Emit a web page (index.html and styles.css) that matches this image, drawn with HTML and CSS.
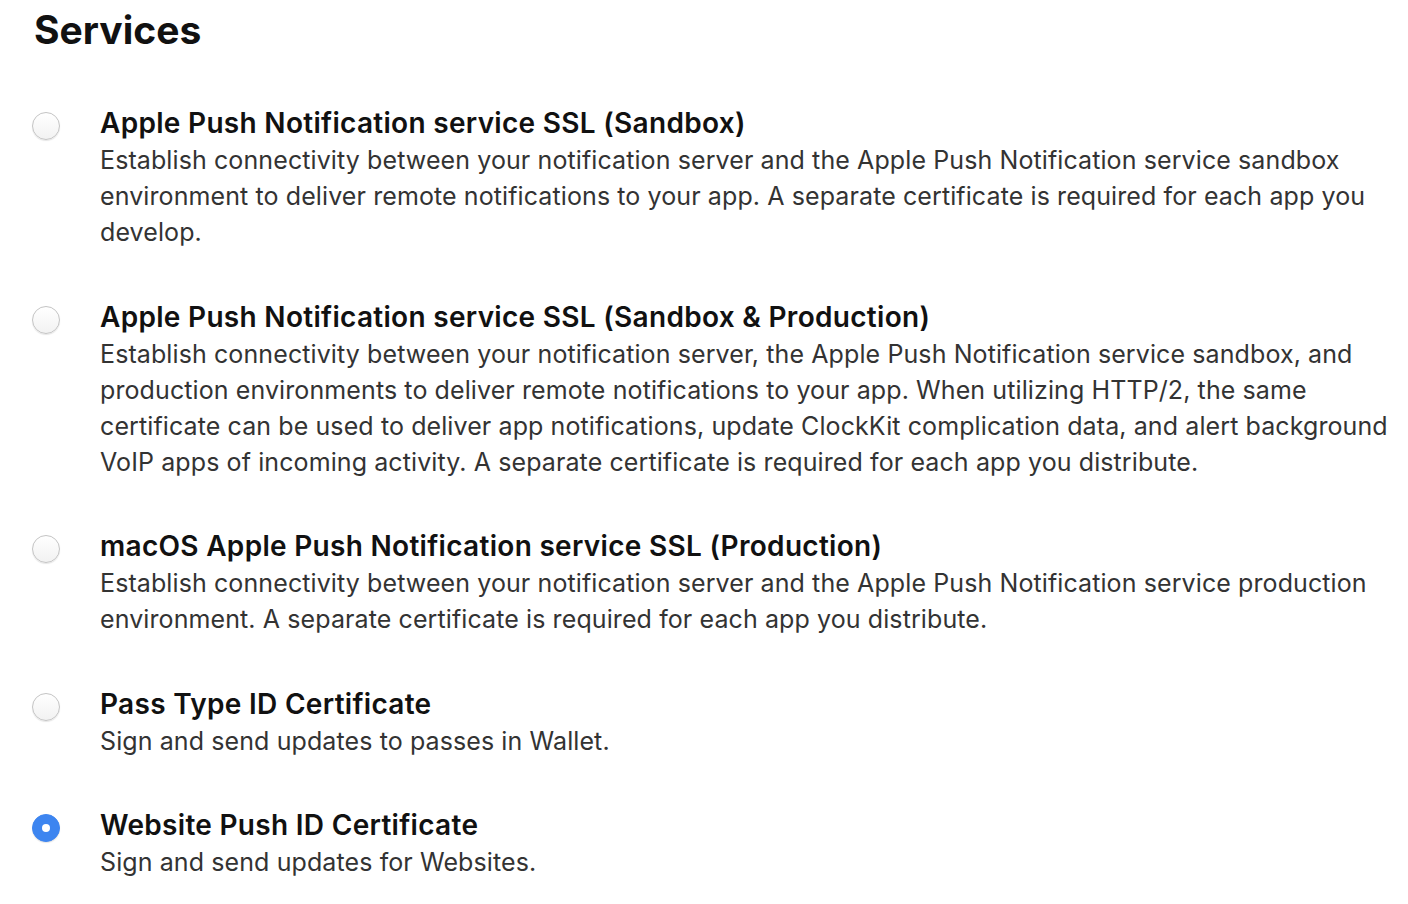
FILE: index.html
```html
<!DOCTYPE html>
<html lang="en">
<head>
    <meta charset="UTF-8">
    <title>Services</title>
    <link rel="stylesheet" href="styles.css">
</head>
<body>
    <div class="page">
        <h1>Services</h1>

        <ul class="services">
            <li class="service">
                <span class="radio"></span>
                <div class="service-text">
                    <h2>Apple Push Notification service SSL (Sandbox)</h2>
                    <p>Establish connectivity between your notification server and the Apple Push Notification service sandbox environment to deliver remote notifications to your app. A separate certificate is required for each app you develop.</p>
                </div>
            </li>
            <li class="service">
                <span class="radio"></span>
                <div class="service-text">
                    <h2>Apple Push Notification service SSL (Sandbox &amp; Production)</h2>
                    <p>Establish connectivity between your notification server, the Apple Push Notification service sandbox, and production environments to deliver remote notifications to your app. When utilizing HTTP/2, the same certificate can be used to deliver app notifications, update ClockKit complication data, and alert background VoIP apps of incoming activity. A separate certificate is required for each app you distribute.</p>
                </div>
            </li>
            <li class="service">
                <span class="radio"></span>
                <div class="service-text">
                    <h2>macOS Apple Push Notification service SSL (Production)</h2>
                    <p>Establish connectivity between your notification server and the Apple Push Notification service production environment. A separate certificate is required for each app you distribute.</p>
                </div>
            </li>
            <li class="service">
                <span class="radio"></span>
                <div class="service-text">
                    <h2>Pass Type ID Certificate</h2>
                    <p>Sign and send updates to passes in Wallet.</p>
                </div>
            </li>
            <li class="service">
                <span class="radio checked"></span>
                <div class="service-text">
                    <h2>Website Push ID Certificate</h2>
                    <p>Sign and send updates for Websites.</p>
                </div>
            </li>
        </ul>
    </div>
</body>
</html>
```

FILE: styles.css
```css
/* Grundlayout */
body {
    margin: 0;
    font-family: Inter, "Noto Sans", sans-serif;
    color: #1d1d1f;
    background: #ffffff;
}
.page {
    padding: 7px 10px 0 32px;
}

h1 {
    font-size: 39px;
    font-weight: 700;
    line-height: 46px;
    margin: 0 0 0 2px;
    color: #111111;
}

/* Liste */
.services {
    list-style: none;
    margin: 51px 0 0 0;
    padding: 0;
}
.service {
    display: flex;
    align-items: flex-start;
    margin-bottom: 47.5px;
}

/* Radio-Buttons */
.radio {
    flex: none;
    width: 26px;
    height: 26px;
    margin: 8px 40px 0 0;
    border: 1px solid #c4c4c4;
    border-radius: 50%;
    background: linear-gradient(#ffffff, #f2f2f2);
    box-shadow: 0 1px 1px rgba(0, 0, 0, 0.1);
}
.radio.checked {
    border-color: #3d85f0;
    background: #3d85f0;
    display: flex;
    align-items: center;
    justify-content: center;
}
.radio.checked::after {
    content: "";
    width: 8px;
    height: 8px;
    border-radius: 50%;
    background: #ffffff;
}

/* Texte */
.service-text h2 {
    font-size: 28px;
    font-weight: 600;
    letter-spacing: 0.3px;
    line-height: 38px;
    margin: 0;
    color: #111111;
}
.service-text p {
    font-size: 25px;
    letter-spacing: 0.1px;
    line-height: 36px;
    margin: 0;
    color: #333333;
}
```
